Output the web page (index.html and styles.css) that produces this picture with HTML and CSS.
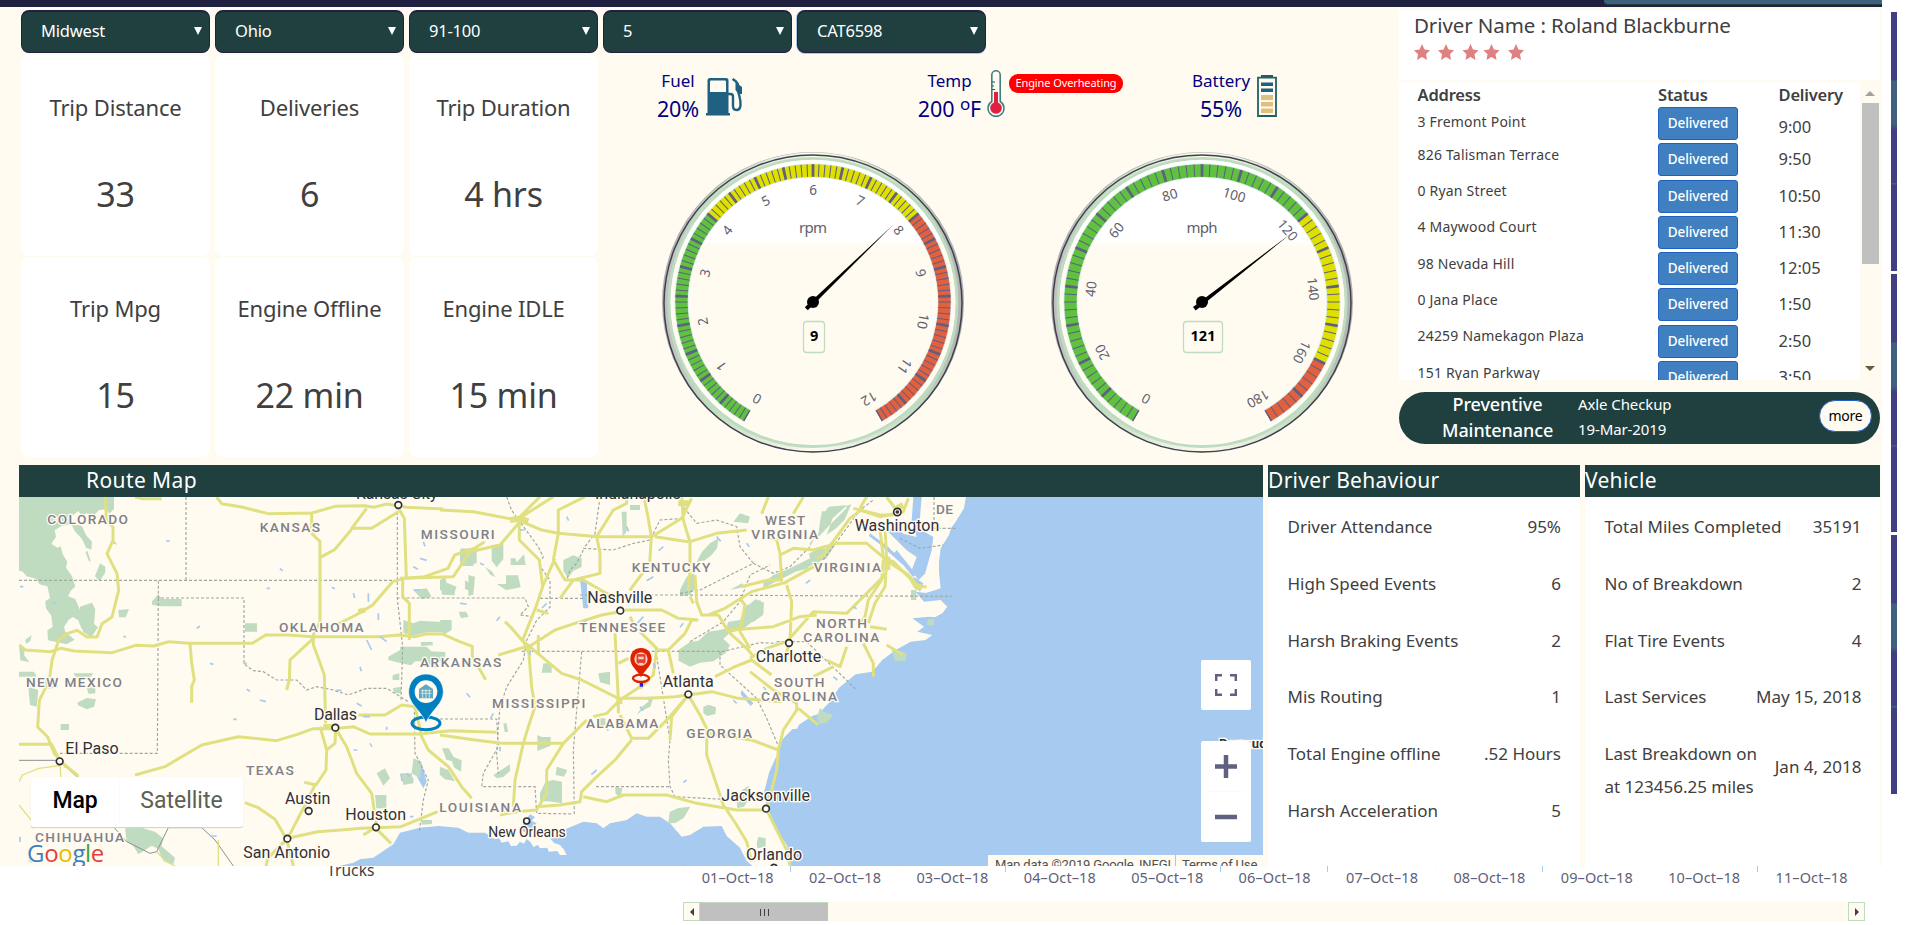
FILE: index.html
```html
<!DOCTYPE html>
<html lang="en">
<head>
<meta charset="utf-8">
<title>Fleet Dashboard</title>
<link rel="stylesheet" href="styles.css">
</head>
<body>
<div class="page">
<div class="screen">
<main class="dash">
  <div class="topbar"><div class="topbar-tab"></div></div>
  <section class="upper">
    <div class="left">
      <div class="selects">
        <div class="select"><span>Midwest</span><i></i></div>
        <div class="select"><span>Ohio</span><i></i></div>
        <div class="select"><span>91-100</span><i></i></div>
        <div class="select"><span>5</span><i></i></div>
        <div class="select focus"><span class="caps">CAT6598</span><i></i></div>
      </div>
      <div class="left-body">
        <div class="cards">
          <div class="card"><h3>Trip Distance</h3><p>33</p></div>
          <div class="card"><h3>Deliveries</h3><p>6</p></div>
          <div class="card"><h3>Trip Duration</h3><p>4 hrs</p></div>
          <div class="card"><h3>Trip Mpg</h3><p>15</p></div>
          <div class="card"><h3>Engine Offline</h3><p>22 min</p></div>
          <div class="card"><h3>Engine IDLE</h3><p>15 min</p></div>
        </div>
        <div class="center">
          <div class="metrics">
            <div class="metric fuel">
              <div class="metric-text"><span>Fuel</span><b>20%</b></div>
              <svg class="fuel-icon" width="37" height="38" viewBox="0 0 37 38"><path d="M4 0h16q2.500 0 2.500 2.500V35H24v2.500H0V35h1.500V2.500Q1.500 0 4 0z" fill="#206080"/><path d="M5 2.500h14q1 0 1 1V14H4V3.500q0-1 1-1z" fill="#fffbf0"/><path d="M22 16h2.500q2.500 0 2.500 3v9q0 4 3.500 4t4-4.500q.3-4-1-9l-1.500-6V8q0-3-2.500-5l-3-2" fill="none" stroke="#206080" stroke-width="2.400"/><path d="M29.500 4l6.500 5v7h-3.500l-3-4z" fill="#206080"/></svg>
            </div>
            <div class="metric temp">
              <div class="metric-text"><span>Temp</span><b>200 <sup>o</sup>F</b></div>
              <svg class="temp-icon" width="18" height="48" viewBox="0 0 18 48"><path d="M4.800 5a4.200 4.200 0 0 1 8.400 0v26.500a8 8 0 1 1-8.400 0z" fill="#fffbf0" stroke="#408080" stroke-width="1.600"/><path d="M7 22h4v10.500a5.800 5.800 0 1 1-4 0z" fill="#e02040"/><path d="M5 12h3M5 16h2M5 19.500h3" stroke="#206060" stroke-width="1.200"/></svg>
              <span class="alert">Engine Overheating</span>
            </div>
            <div class="metric battery">
              <div class="metric-text"><span>Battery</span><b>55%</b></div>
              <svg class="battery-icon" width="20" height="43" viewBox="0 0 20 43"><path d="M4 0h12v3H4z" fill="#206060"/><path d="M1 2.700h18V41H1z" fill="#fffbf0" stroke="#206060" stroke-width="1.800"/><path d="M4 7.500h12V11H4zM4 13.500h12V17H4z" fill="#206080"/><path d="M4 20h12v5H4zM4 27h12v4.500H4zM4 33.500h12V38H4z" fill="#e0c080"/></svg>
            </div>
          </div>
          <div class="gauges">
            <svg class="gauge" width="320" height="310" viewBox="-160 -155 320 310">
              <defs><linearGradient id="side" x1="0" x2="1" y1="0" y2="0"><stop offset="0" stop-color="#c0c0c0"/><stop offset=".15" stop-color="#c0dcc0"/><stop offset=".5" stop-color="#fffbf0"/><stop offset=".85" stop-color="#c0dcc0"/><stop offset="1" stop-color="#b4b4b4"/></linearGradient>
              <linearGradient id="face" x1="0" x2="0" y1="0" y2="1"><stop offset=".28" stop-color="#fff"/><stop offset=".31" stop-color="#fffbf0"/></linearGradient></defs>
              <ellipse rx="150" ry="149" class="rim-out"/>
              <circle r="147" fill="none" stroke="url(#side)" stroke-width="5"/>
              <ellipse cy="1.500" rx="149" ry="148.500" class="rim-dark"/>
              <circle r="144" cy=".5" class="rim-green"/>
              <circle r="142.300" fill="url(#face)"/>
              <path class="halo" d="M-65.750 113.900A131.500 131.500 0 1 1 65.750 113.900"/>
              <path class="band green" pathLength="300" stroke-dasharray="100 300" d="M-65.750 113.900A131.500 131.500 0 1 1 65.750 113.900"/>
              <path class="band yellow" pathLength="300" stroke-dasharray="0 100 100 300" d="M-65.750 113.900A131.500 131.500 0 1 1 65.750 113.900"/>
              <path class="band red" pathLength="300" stroke-dasharray="0 200 100 300" d="M-65.750 113.900A131.500 131.500 0 1 1 65.750 113.900"/>
              <path class="band tick" pathLength="300" stroke-dasharray=".45 2.050" stroke-dashoffset=".22" d="M-65.750 113.900A131.500 131.500 0 1 1 65.750 113.900"/>
              <path class="band tick" pathLength="300" stroke-dasharray="1.200 11.300" stroke-dashoffset=".6" d="M-65.750 113.900A131.500 131.500 0 1 1 65.750 113.900"/>
              <g class="nums">
                <text transform="rotate(-150)" y="-107">0</text><text transform="rotate(-125)" y="-107">1</text><text transform="rotate(-100)" y="-107">2</text><text transform="rotate(-75)" y="-107">3</text><text transform="rotate(-50)" y="-107">4</text><text transform="rotate(-25)" y="-107">5</text><text y="-107">6</text><text transform="rotate(25)" y="-107">7</text><text transform="rotate(50)" y="-107">8</text><text transform="rotate(75)" y="-107">9</text><text transform="rotate(100)" y="-107">10</text><text transform="rotate(125)" y="-107">11</text><text transform="rotate(150)" y="-107">12</text>
              </g>
              <text class="unit" y="-69" textLength="28">rpm</text>
              <rect class="valbox" x="-9.500" y="19.500" width="21" height="31" rx="3"/><text class="val" x="1.200" y="39">9</text>
              <path d="M80.500 -77.500L-5.200 8.200-8.200 5.200z"/><circle r="6"/>
            </svg>
            <svg class="gauge" width="320" height="310" viewBox="-160 -155 320 310">
              <ellipse rx="150" ry="149" class="rim-out"/>
              <circle r="147" fill="none" stroke="url(#side)" stroke-width="5"/>
              <ellipse cy="1.500" rx="149" ry="148.500" class="rim-dark"/>
              <circle r="144" cy=".5" class="rim-green"/>
              <circle r="142.300" fill="url(#face)"/>
              <path class="halo" d="M-65.750 113.900A131.500 131.500 0 1 1 65.750 113.900"/>
              <path class="band green" pathLength="300" stroke-dasharray="200 300" d="M-65.750 113.900A131.500 131.500 0 1 1 65.750 113.900"/>
              <path class="band yellow" pathLength="300" stroke-dasharray="0 200 66.667 300" d="M-65.750 113.900A131.500 131.500 0 1 1 65.750 113.900"/>
              <path class="band red" pathLength="300" stroke-dasharray="0 266.667 33.333 300" d="M-65.750 113.900A131.500 131.500 0 1 1 65.750 113.900"/>
              <path class="band tick" pathLength="300" stroke-dasharray=".45 2.883" stroke-dashoffset=".22" d="M-65.750 113.900A131.500 131.500 0 1 1 65.750 113.900"/>
              <path class="band tick" pathLength="300" stroke-dasharray="1.200 15.467" stroke-dashoffset=".6" d="M-65.750 113.900A131.500 131.500 0 1 1 65.750 113.900"/>
              <g class="nums">
                <text transform="rotate(-150)" y="-107">0</text><text transform="rotate(-116.700)" y="-107">20</text><text transform="rotate(-83.300)" y="-107">40</text><text transform="rotate(-50)" y="-107">60</text><text transform="rotate(-16.700)" y="-107">80</text><text transform="rotate(16.700)" y="-107">100</text><text transform="rotate(50)" y="-107">120</text><text transform="rotate(83.300)" y="-107">140</text><text transform="rotate(116.700)" y="-107">160</text><text transform="rotate(150)" y="-107">180</text>
              </g>
              <text class="unit" y="-69" textLength="31">mph</text>
              <rect class="valbox" x="-18.500" y="19.500" width="39" height="31" rx="3"/><text class="val" x="1" y="39">121</text>
              <path d="M88.500 -68L-6.300 8.500-9 5z"/><circle r="6"/>
            </svg>
          </div>
        </div>
      </div>
    </div>
    <div class="right">
      <div class="driver">
        <h2>Driver Name : Roland Blackburne</h2>
        <svg width="112" height="18" viewBox="0 0 112 18" fill="#e08080"><defs><path id="star" d="M8 0l2.500 5.500 5.500.7-4 4 1 5.800-5-2.900L3 16l1-5.800-4-4 5.500-.7z"/></defs><use href="#star" y="1"/><use href="#star" x="24" y="1"/><use href="#star" x="48.500" y="1"/><use href="#star" x="69.500" y="1"/><use href="#star" x="94" y="1"/></svg>
      </div>
      <div class="stops">
        <div class="stop-list">
          <div class="stop head"><span>Address</span><span>Status</span><span>Delivery</span></div>
          <div class="stop first"><span>3 Fremont Point</span><a>Delivered</a><em>9:00</em></div>
          <div class="stop"><span>826 Talisman Terrace</span><a>Delivered</a><em>9:50</em></div>
          <div class="stop"><span>0 Ryan Street</span><a>Delivered</a><em>10:50</em></div>
          <div class="stop"><span>4 Maywood Court</span><a>Delivered</a><em>11:30</em></div>
          <div class="stop"><span>98 Nevada Hill</span><a>Delivered</a><em>12:05</em></div>
          <div class="stop"><span>0 Jana Place</span><a>Delivered</a><em>1:50</em></div>
          <div class="stop"><span>24259 Namekagon Plaza</span><a>Delivered</a><em>2:50</em></div>
          <div class="stop"><span>151 Ryan Parkway</span><a>Delivered</a><em>3:50</em></div>
        </div>
        <div class="vscroll"><i class="up"></i><div class="vthumb"></div><i class="down"></i></div>
      </div>
      <div class="pm">
        <div class="pm-title">Preventive<br>Maintenance</div>
        <div class="pm-text">Axle Checkup<br>19-Mar-2019</div>
        <div class="more">more</div>
      </div>
    </div>
  </section>
  <section class="lower">
    <div class="panel map-panel">
      <h2>Route Map</h2>
      <div class="map">
      <svg width="1244" height="369" viewBox="57 111 3732 1107" preserveAspectRatio="none">
        <rect x="57" y="111" width="3732" height="1107" fill="#fffbf0"/>
        <g class="water">
          <path d="M1018 1218l42-10 20-10 40-5 60-40 20-35 60-15 55-5 60 5 30 15 50 0 30 20 12-4 8 14 20-4 8 14 17-1 10-12 12 6 8-14 12 10 8 14 14-6 6 10 22-2 4 12 26-2 8 12 20 0-8-16-12-14-18-6-12-14 40-25 60-25 40 5 20 15 20-15 50-10 30-20 30 10 40 0 30 20 35 40 25-5 40-25 55-2 15 30 40 35 20 40 30 25 10 30z"/>
          <path d="M2372 1218l-10-60-20-30-15-30-25-50-10-50 15-60 20-45 8-14 4-30 13-16 25-25 14-2 6-12 40-26 18-6 32-34 30-45 50-40 50-8 30-35 40-30 45-25 45-5 20-15-45-10 20-15-35-25 50-5 18 2 22-12 15-20-20-20-50 5-25-30 30 4 30-9 15-5-5-50 0-30 5-40 25-40 6-20 14-20 25-40 10-60 40-55H3789V1218z"/>
          <path d="M2740 111h25l-5 60-10 30 50 30-5 40-20 70-20 20-20-30 15-40-30-20-60-60 30-10 20 20 40 10-15-50z"/>
          <path d="M2650 250l70 60-10 6-62-56zM2690 270l60 75-12 5-56-70zM2610 220l60 45-8 5-55-42zM2740 350l30 20-10 25-18-20z"/>
          <path d="M1555 1105l35-25 20 10-30 30zM1740 360l20 0 5 85-15 0zM1570 1088l20-25 15 8-20 22zM1245 940l20-30 15 55-10 20zM2225 690l35 40-8 8-30-35zM1200 940l40 15 0 14-36-5z"/>
        </g>
        <g class="parks">
          <path d="M57 111h285v36l-14 14-8-14-24 4-22 26-14-18-16 10-8-16-30 22 18 16 22 8 12 26 18 20-2 24-16-6-12-26-22-24-10-20-28 4-22 14 4 20-14 20 18 12 10-4 6 24 14 22-4 18 18 26 10 30-14 14-8 16 22 8 10 24 8 20-6 22-20-12-12 8-14 22 4 14 28 24-24 14-56-12-2-30 16-10-4-34-16-22-2-22 14-8-8-36-24-6-8-16-30-8-12-14-16-4-24-10z"/>
          <path d="M240 440l36-12 10 20-4 44 12 10-20 30-24-16-14-30zM300 310l16 10 0 18-18 26-13-16zM262 272l10 30-4 4-12-30zM340 238l12 16-16-4zM355 450l32-3-10 25-20 0zM455 425l20-22 10 14 60 0v22h-60l-28-4zM735 490h36v25h-36zM57 555l16 12 0 20 16 20-28-6zM57 635h45l8 15h-53zM75 540l20-15-4 18-12 8zM220 640l60 0-15 20-35-5zM85 680l30 10-5 50-20-5zM130 660l40 0 4 22-30 4zM260 684l26-4 0 20-20 2zM232 728l28-14 28 4-6 22-22 8-26-12zM182 792h25v18h-25zM375 1105l50-2 40 12 24 20-4 24 40 34-5 20-30-10-15-36-20-10-40 26-15-26-20-12zM90 1180l6 30-10-6zM1130 940l25-15 15 30-20 22zM1205 940l30 0 5 30-30 5zM1240 895l25 10-5 50-25-15zM1125 1005h34v40h-30zM1380 270l50-10 0 50-50 8zM1210 480l30 10 20-8 80 5v30h-60l-40 10-30-8zM1240 390l40-5 15 25-30 8zM1320 360l50 20-10 25-40-15zM1395 360l20 15 0 20-20-8zM1376 455l22 0 8 16-24 2zM1165 590l35-20 0-10 80 0 14 14 42 2 0 26-20 4-2 18-40-4-8-16-20 0-14 12-34-8-33-8zM1262 546l36 0 0 10-34 2zM1178 645l20-5 0 20-20 0zM1178 685l25-5 0 20-20 0zM1326 865l20 0 15 26 24 10-2 34-20-12-8-20-16-4zM1320 920l25 10 20 34-30-6-16-14zM1210 502l60-18 10 20-60 15zM1262 1080l34 0 0 12-30 2z"/>
          <g transform="translate(1320)"><path d="M62 265l48 3-10 50-40 0zM155 255l35-3 0 45-20 25-15-20zM212 295l14 0 4 12 22-24 5 32-45 0zM0 360l16-10 4 22 26 10-2 24-38-2zM85 345l20 5-5 54-15 4zM135 320l20 14 12 18-16-8zM170 372l28 0 0-26 36 0 8 36-44 8zM60 455l25 10-20 10zM0 480l35 0 0 30-25 15zM370 300l30-14 25 9 0 26-25 12-16 20-14-20zM310 610l25 0 0 28-30 0zM475 640l35-5 0 40-30-8zM480 775l16 0 0 20-16 5zM190 790l10 0 4 26-10 0zM292 825l14 6 26 0 0 26-40 16zM160 945l50-32 0 20-20 18-20 4zM350 920l32 10-10 20-25-5zM300 1000l16-34 22-6 28 5 0 65-40-6-26 0zM525 980l22 5-5 25-15-8zM590 765l15-24 20-16 0-15 16 0-10 30-26 12zM790 760l0-20 16-6 22 8-2 20-24 6zM685 1090l4-34 26-12 36-4-20 34-25 15zM880 185l20-25 30 10-6 20zM545 155l15 0 0 60-12 15zM570 135h30v15h-30zM810 250l25-15-4 30-16 20-20 16-25 4 16-30zM720 390l20-40 22-12 5 46-18 20-29 4zM870 390l35-20 12 10-47 10zM1130 775l10-32 10 12 30 10-20 24-20 2zM1365 570l35 10-2 22-24-12zM950 1150l5-20 22 5 0 25-25 5zM890 1025l20-15-4-20 20-12 6 30-20 32-20 4z"/>
          <path d="M715 570l35-24 25-4 30-27 35-5 20-6 4-18 36-6 10-24 10-20 40-16 10 16-20 40-46 34-34 8-20 18 20 20-14 24-36 24-40 4-30 12-34-18zM970 370l30-25 50-20 60-30-4-14 34-17 20 2 10-16 20-2-30 46-50 24-10 10-30 6-40 20-60 30zM1110 262l14-30 12-2 34-36 50-50-4-8-50 4-10 14-10 0-6 30-4 34-26 30zM1160 225l18-50 42-38 14-4-20 46-24 24zM900 480l20-40 26-22 26 10-2 36-30 22z"/></g>
          <path d="M2675 570l40 8 3 25-33 0zM2733 390l16 0 0 30-16 0zM2783 478l20 0 0 18-22 0z"/>
        </g>
        <g class="borders">
          <path d="M558 111V362M57 361H1190M475 362V414H732V612L760 632 790 635 830 660 890 660 920 690 950 680 1000 690 1045 705 1100 685 1160 685 1225 725M475 414L472 880H180M1192 111V415L1208 560 1203 720M1190 414H1575L1585 440 1560 465 1600 470M1243 740L1245 880 1285 960 1270 1020 1258 1115M1320 777H1490L1495 860 1450 940 1445 980H1605L1610 1060 1720 1062"/>
          <g transform="translate(1320)"><path d="M200 111l15 40 80 110 15 30-15 20 35 50 0 80-40 40-30 60-10 60-50 80-20 60-5 60-5 80 5 60M300 415h135M420 405H700L1535 409M245 574H850L960 548 1010 550M425 575L400 870 403 1062M648 575L690 840 685 900 690 980 705 1010 850 1018M468 980H690M840 575l0 40 110 100 30 60 40 95M750 545l100-60 50-60 30-80 60-30M720 400l60-10 160-80-40-50-10-60-60-20-60 10-40-50M430 270l-20 40-20 20-10 30M430 265l90 5 60-20 50-10 30-60 70-5M480 111l-15 110-35 45M1150 300l110-150 40-30M1010 545l90 0 150 145M940 310l60 30 50-20 60-60"/></g>
          <path d="M2802 111V205H2870M2700 235l60 30 70-10"/>
        </g>
        <g class="intl"><path d="M57 901H178L235 950 340 1100 380 1145 450 1180 470 1175 505 1103H605L645 1140 700 1218M230 950l-50-45"/></g>
        <g class="minor"><path d="M57 965l10-20 50-20 60-8M57 1035l40 50 0 20M655 1140l0 78M470 1175l30 30 25 13M180 905l3 60"/></g>
        <g class="roads">
          <path d="M317 111l2 70 20 20 0 40-18 40 30 60 5 50-20 80-30 20-15 40-30 0-30-20-30 10-25 20-20 60-8 60-30 60-5 80 30 30 20 50 20 20 15 20M57 555l20 15 75 5 30-10 40 8 115 5 70-22 55 2 45-13 60 5h190l40-25 70 0 70 5h200l60-5 50 5 30-8h50l50 22 40 15 0 30 40 70M570 550l5 60 8 50-8 20v48M57 853h98l25 50 55 45M405 945l90-25 110-65 110-25 115 12 60-18 50-18h60l60-6 50 22 150 0 90-10 140 5M650 111l15 20 60 10 80 20 130-2 70-20 90-2 25 5 40-10 60 10 110 5M405 111l20 5 60 0M1100 145l-45 60 60 0 80-50M1055 208l-50 60-45 25M935 160l0 60 25 25v240l-20 40 0 30 15 40 18 50 4 145M940 535l-70 65-2 60-8 30M1195 145l18 30 6 180 55-5 70-25 20-40 60-20 30-20M1213 355l-35 10-60 70-50 30-60 30M1208 360v50l20 20 0 110M1075 765h80l50-30 40 5 20 90 20 40 60 50 40 60 30 35M960 800l20 70 25-20 2-45M980 870l-2 60-30 45-35-8M945 975l-30 60-52 100-60 60-5 25M1010 810l30 50 30 80 45 60 15 100-40 25M863 1135l90-20 70-5 60-5 120-5 110-45M1128 1105l45 45M735 1028l40 15 50 35 35 60 20 80"/>
          <path d="M970 800h40M1075 455l20-5" stroke-width="16"/>
          <g transform="translate(1320)"><path d="M-120 355l160-5 20-30 30-45 90-20 60-70 5-15M0 150l100 5 130 25 110-70M230 180l70-70M245 185l60 25 50 10 120 10 160 0 90-55 30-60M238 190l0 50 60 60 10 80-20 60-40 100 20 40M355 220l0-70 80-40M355 220l-15 80 35 60 55 0 60 35 20 10M310 375l35-80M360 415l40-55 80-20 0-60-10-50 50-80 40-20 0-20M612 111l12 60 10 60-5 80-30 40-30 40M725 111l5 70 20 65 0 85-5 60M750 245l80-25 90-10M555 450h110l50 25 60 5M645 230l100 15M540 455l-55 10-80 25-60 20-70 45-100 30M265 560l10 120 10 60-20 60-15 50-25 110-5 80M245 540l60 50 60 50 60 20 110 55 90 0 80-5 110-15 80 20 130 10M195 485l20 20 35 40M290 450l35 10M295 585l0-60M525 520l5 100 5 100 0 40M535 610l30-15M600 680l-60 40-40 40-40 10M540 765l35 70 50 0 60-60 60-70M440 780l-70 70-120 0-65 0-80-10-105-15M370 850l-50 80 0 70-30 50-60 5-50 10M575 840l-50 60-60 55-40 40-5 30-60 10-70 5M430 1010l70 15 50-20 130 0 90 25 120 20 100 0M745 705l35 60 20 40 0 80 20 60 30 90 40 60 30 50 15 60M980 1050l30 60 30 60 10 48M805 820l130 20 80 30 15-60 40-60 0-20-70-40-70-55M1075 745l60 50M1015 870l-5 60-20 80-10 40M690 840l5-70 50-65M600 515l50 50-10 80-40 40M755 480l-20 40-50 50-30 0M685 570l15 70M590 510l-20-40M765 345l5 80 15 40 50 0 30 50 60 55 15 20M760 430l-10-20M1045 365l-110 30-80 50-50 20M900 415l15 20-15 80 30 50M870 510l130-10 80-30 50-5M930 595l50-30 60-20 80-90 100 5 60-60 60-60M825 650l60-30 50-20 60 45M1040 375l15 50-5 120-20 60M1340 300l-60-50-90 0-70 20-60-5-40 20 5 75-40 0-80 20M1340 300l-5-100M1030 370l110-60M1270 145l-40 30-80 110-20 10M1240 145l80 20 40 0M1340 300l-5 80-30 50-20 60M1345 305l60 40 35 40M1290 500l50 8M1220 560l-20 60-40-20M1270 550l30 60 0 40M1180 620l-60 30M1260 145l20-35M985 111l-20 50M1090 111l-30 50M980 230l30 10 10 40"/>
          <path d="M210 180l30-4 25 8M715 130h32M538 712v20M2 0" stroke-width="18"/></g>
          <path d="M2580 150l60 20 70-15 15-40M2660 111l30 40M2640 210l10 85 30 10 50 50 15 25 35 0M2650 300l-5 60-40 60-10 50-15 20M2660 555l50 30"/>
          <path d="M2662 290v40M2690 145l20-10M2745 380h20" stroke-width="18"/>
        </g>
        <g class="ponds"><path d="M498 243h12M840 325l8 8M800 385h10M590 505l10-6M730 610h10M630 610l10 3M780 720l18 5M740 688l10 6M700 778h10M1105 400v25M1135 460v20M1060 400l4 14M995 382l10 4M1100 540l15 30M1140 530l20 15M1010 690l15 2M1070 730l15 8M1090 770l20 0M1080 620l4 14M1160 800v10M1270 245l5 14M1260 295l20 6M1240 320l14 8M1240 390h20M1380 430l20 2M1400 700l10 12M1440 310l12 5M1590 570l0 15M1110 850l6 10M1060 870l12 0M1220 940l10 10M1230 1070l10 0M1960 350l-20 12M1990 260l-14 12M2150 230l12 14M2050 490l-10 12M1930 470l-20 22M1640 430l-14 14M1500 470l-10 12M1480 760l-8 14M1500 860l0 14M1790 930l-16 14M1760 480l-14 14M2060 960l-10 8M1820 800l4 12M1920 740l10 12M1960 610l6 14M2290 680l8 10M2440 700l20 6M2500 650l12 10M2560 440l10 6M2430 360l-12 10M2350 220l-12 20M2240 250l8 10M2200 720l10 10M1700 170l6 12M1560 210l14 0M1880 200l6 14M60 380h10M160 425l6 8M370 530h8M60 1130v16M630 1128h20"/></g>
        <g class="state">
          <text x="142" y="192" textLength="242">COLORADO</text><text x="779" y="215" textLength="181">KANSAS</text><text x="1262" y="237" textLength="222">MISSOURI</text><text x="837" y="515" textLength="254">OKLAHOMA</text><text x="78" y="682" textLength="288">NEW MEXICO</text><text x="1260" y="620" textLength="244">ARKANSAS</text><text x="738" y="944" textLength="143">TEXAS</text><text x="105" y="1145" textLength="267">CHIHUAHUA</text><text x="1318" y="1055" textLength="245">LOUISIANA</text><text x="1476" y="743" textLength="280">MISSISSIPPI</text><text x="1758" y="803" textLength="217">ALABAMA</text><text x="2059" y="834" textLength="197">GEORGIA</text><text x="1738" y="515" textLength="258">TENNESSEE</text><text x="1895" y="335" textLength="236">KENTUCKY</text><text x="2295" y="194" textLength="120">WEST</text><text x="2254" y="236" textLength="200">VIRGINIA</text><text x="2441" y="335" textLength="202">VIRGINIA</text><text x="2448" y="503" textLength="153">NORTH</text><text x="2410" y="545" textLength="228">CAROLINA</text><text x="2322" y="681" textLength="151">SOUTH</text><text x="2283" y="723" textLength="228">CAROLINA</text><text x="2808" y="162" textLength="51">DE</text>
        </g>
        <g class="dots"><circle cx="1195" cy="135" r="10"/><circle cx="1006" cy="803" r="10"/><circle cx="179" cy="904" r="10"/><circle cx="926" cy="1053" r="10"/><circle cx="1128" cy="1102" r="10"/><circle cx="862" cy="1136" r="10"/><circle cx="1861" cy="452" r="10"/><circle cx="2367" cy="549" r="10"/><circle cx="2065" cy="703" r="10"/><circle cx="1580" cy="1083" r="9"/><circle cx="2298" cy="1046" r="10"/><circle cx="2322" cy="1222" r="9"/><circle cx="2692" cy="156" r="11"/><circle cx="2692" cy="156" r="3"/></g>
        <g class="city">
          <text x="1068" y="116" textLength="245">Kansas City</text><text x="1785" y="118" textLength="257">Indianapolis</text><text x="942" y="780" textLength="129">Dallas</text><text x="196" y="881" textLength="160">El Paso</text><text x="855" y="1032" textLength="136">Austin</text><text x="1036" y="1080" textLength="182">Houston</text><text x="730" y="1193" textLength="260">San Antonio</text><text x="1762" y="430" textLength="195">Nashville</text><text x="2267" y="606" textLength="197">Charlotte</text><text x="1988" y="681" textLength="153">Atlanta</text><text x="1465" y="1132" textLength="232" class="small">New Orleans</text><text x="2164" y="1024" textLength="266">Jacksonville</text><text x="2238" y="1200" textLength="168">Orlando</text><text x="2564" y="213" textLength="254">Washington</text><text x="3657" y="864" class="bold" textLength="165">Bermuda</text>
        </g>
        <g class="pin-blue"><ellipse cx="1278" cy="790" rx="42" ry="19" fill="none" stroke="#0080c0" stroke-width="9"/><path d="M1278 642c32 0 52 24 52 54 0 36-36 54-52 92-16-38-52-56-52-92 0-30 20-54 52-54z" fill="#0080c0" stroke="#fffbf0" stroke-width="2"/><circle cx="1278" cy="695" r="34" fill="#fffbf0"/><path d="M1257 687l21-14 21 14v28h-42z" fill="#60a8c0"/><path d="M1262 692h32M1262 700h32M1268 688v26M1278 688v26M1288 688v26" stroke="#d0e4d8" stroke-width="3"/></g>
        <g class="pin-red"><path d="M1924 668v12" stroke="#2020e0" stroke-width="10"/><ellipse cx="1923" cy="655" rx="24" ry="11" fill="none" stroke="#e02000" stroke-width="7"/><path d="M1923 564c19 0 32 14 32 33 0 22-22 34-32 55-10-21-32-33-32-55 0-19 13-33 32-33z" fill="#e02000"/><circle cx="1923" cy="597" r="20" fill="#f8d0c0"/><path d="M1911 584h24v23h-24zM1913 612l5-5M1933 612l-5-5" fill="#e04030" stroke="#e04030" stroke-width="3"/><path d="M1915 590h16v8h-16z" fill="#f8d0c0"/></g>
        <g class="google"><text x="81" y="1205" textLength="232"><tspan fill="#4080c0">G</tspan><tspan fill="#e04040">o</tspan><tspan fill="#e0c000">o</tspan><tspan fill="#4080c0">g</tspan><tspan fill="#40a040">l</tspan><tspan fill="#e04040">e</tspan></text></g>
      </svg>
      <div class="map-type"><span class="on">Map</span><span>Satellite</span></div>
      <div class="map-btns">
        <div class="full"><svg width="22" height="22" viewBox="0 0 22 22"><path d="M1.200 7V1.200H7M15 1.200h5.800V7M20.800 15v5.800H15M7 20.800H1.200V15" fill="none" stroke="#606080" stroke-width="2.400"/></svg></div>
        <div class="zoom"><svg width="50" height="101" viewBox="0 0 50 101"><path d="M14 25.500h22M25 14v23M14 76h22" stroke="#606080" stroke-width="4.500"/><path d="M6 50.500h39" stroke="#fffbf0"/></svg></div>
      </div>
      <div class="credit"><span>Map data ©2019 Google, INEGI</span><span>Terms of Use</span></div>
      </div>
    </div>
    <div class="panel behaviour">
      <h2>Driver Behaviour</h2>
      <dl><dt>Driver Attendance</dt><dd>95%</dd><dt>High Speed Events</dt><dd>6</dd><dt>Harsh Braking Events</dt><dd>2</dd><dt>Mis Routing</dt><dd>1</dd><dt>Total Engine offline</dt><dd>.52 Hours</dd><dt>Harsh Acceleration</dt><dd>5</dd></dl>
    </div>
    <div class="panel vehicle">
      <h2>Vehicle</h2>
      <dl><dt>Total Miles Completed</dt><dd>35191</dd><dt>No of Breakdown</dt><dd>2</dd><dt>Flat Tire Events</dt><dd>4</dd><dt>Last Services</dt><dd>May 15, 2018</dd><dt class="two">Last Breakdown on<br>at 123456.25 miles</dt><dd class="two">Jan 4, 2018</dd></dl>
    </div>
  </section>
</main>
<aside class="strip"><i></i><i></i><i></i></aside>
</div>
<footer class="timeline">
  <div class="trucks"><span>Trucks</span></div>
  <div class="axis">
    <div class="days"><span>01–Oct–18</span><span class="b">02–Oct–18</span><span>03–Oct–18</span><span class="b">04–Oct–18</span><span>05–Oct–18</span><span class="b">06–Oct–18</span><span class="b">07–Oct–18</span><span>08–Oct–18</span><span class="b">09–Oct–18</span><span>10–Oct–18</span><span class="b">11–Oct–18</span></div>
    <div class="hscroll"><div class="hbtn"><i class="l"></i></div><div class="hthumb"><i></i><i></i><i></i></div><div class="hbtn end"><i class="r"></i></div></div>
  </div>
</footer>
</div>
</body>
</html>
```
FILE: styles.css
```css
* { box-sizing: border-box; }
body { margin: 0; background: #fff; color: #404040; font-family: "Noto Sans", "Open Sans", sans-serif; }
h2, h3, p, dl, dt, dd { margin: 0; font-weight: 400; }
.page { width: 1920px; height: 925px; overflow: hidden; display: flex; flex-direction: column; }
.screen { display: flex; height: 866px; }
.dash { width: 1882px; background: #fffbf0; }
.topbar { height: 7px; background: #202040; display: flex; justify-content: flex-end; }
.topbar-tab { width: 278px; height: 5px; background: #406080; border-bottom: 1px solid #204040; border-bottom-left-radius: 4px; }
.upper { display: flex; height: 458px; padding-top: 3px; }
.left { width: 1399px; }
.selects { display: flex; gap: 5px; padding-left: 21px; height: 45px; }
.select { width: 189px; height: 43px; border-radius: 8px; background: #204040; border: 1px solid #202040; border-top-width: 2px; color: #fff; font-size: 16.500px; line-height: 38px; padding: 0 7px 2px 19px; display: flex; justify-content: space-between; align-items: center; letter-spacing: -.2px; }
.select i { border: 4px solid transparent; border-top: 8px solid #fff; border-bottom: 0; margin-bottom: 1px; }
.select.focus { box-shadow: 0 1px 0 #a6caf0, -1px 0 0 #a6caf0; }
.left-body { display: flex; }
.cards { margin-left: 21px; width: 577px; display: grid; grid-template-columns: repeat(3, 189px); grid-auto-rows: 200.500px; gap: 1px 5px; }
.card { background: #fff; border-radius: 8px; text-align: center; padding-top: 32px; }
.card:nth-child(n+4) { padding-top: 31px; }
.card h3 { font-size: 22px; line-height: 40px; letter-spacing: -.17px; white-space: nowrap; }
.card p { font-size: 34px; line-height: 50px; margin-top: 42px; letter-spacing: -.2px; }
.center { flex: 1; }
.metrics { display: grid; grid-template-columns: 261px 274px 1fr; padding-left: 58px; height: 91.700px; color: #000080; }
.metric { display: flex; align-items: flex-start; padding-top: 13px; }
.metric-text { display: flex; flex-direction: column; align-items: center; white-space: nowrap; }
.metric-text span { font-size: 17px; line-height: 25px; letter-spacing: 0; }
.metric-text b { font-weight: 400; font-size: 21.500px; line-height: 31px; letter-spacing: -.1px; }
.metric-text sup { font-size: 17px; line-height: 0; vertical-align: 7px; }
.fuel .metric-text { width: 44px; }
.temp .metric-text { width: 65px; }
.battery .metric-text { width: 60px; }
.fuel-icon { margin: 10px 0 0 6px; }
.temp-icon { margin: 2px 0 0 5px; }
.battery-icon { margin: 7px 0 0 6px; }
.alert { margin: 6px 0 0 4px; height: 19px; width: 114px; border-radius: 9px; background: #f00; color: #fff; font-size: 11px; line-height: 18px; text-align: center; letter-spacing: -.1px; white-space: nowrap; }
.gauges { display: flex; gap: 68.700px; padding-left: 55.300px; }
.gauge { display: block; }
.rim-out { fill: #fffbf0; stroke: #b0b0b0; stroke-width: 2; }
.rim-dark { fill: none; stroke: #404050; stroke-width: 1.500; }
.rim-green { fill: #fff; stroke: #c0dcc0; stroke-width: 3; }
.halo { fill: none; stroke: #d8ecf0; stroke-width: 14; }
.band { fill: none; stroke-width: 12.300; }
.green { stroke: #60c040; }
.yellow { stroke: #e0e000; }
.red { stroke: #e06040; }
.tick { stroke: #606080; }
.nums text { font-size: 13.500px; text-anchor: middle; fill: #606070; }
.unit { font-size: 15px; text-anchor: middle; fill: #606068; }
.valbox { fill: #fffbf0; stroke: #c0dcc0; stroke-width: 1.300; }
.val { font-size: 14.500px; font-weight: 700; text-anchor: middle; fill: #000; }
.right { width: 481px; }
.driver { height: 70px; background: #fff; padding-left: 15px; }
.driver h2 { font-size: 20.500px; line-height: 30px; white-space: nowrap; letter-spacing: -.1px; }
.driver svg { display: block; margin-top: 3px; }
.stops { margin-top: 2px; height: 298px; display: flex; overflow: hidden; }
.stop-list { width: 461px; background: #fff; padding-left: 18.500px; }
.stop { display: grid; grid-template-columns: 240.500px 120.500px 1fr; height: 36.300px; white-space: nowrap; }
.stop.head { height: 25px; font-weight: 600; }
.stop span { font-size: 14px; line-height: 20px; padding-top: 1.500px; letter-spacing: .2px; }
.stop.head span { font-size: 16.500px; line-height: 25px; padding: 0; letter-spacing: -.2px; }
.stop a { width: 80px; height: 33px; border: 1px solid #2060c0; border-radius: 3px; background: #4080c0; color: #fff; font-size: 13.500px; font-weight: 500; line-height: 31px; text-align: center; letter-spacing: -.1px; }
.stop em { font-style: normal; font-size: 16.500px; line-height: 24px; padding-top: 4px; }
.stop.first span { padding-top: 5px; }
.stop.first em { padding-top: 8px; }
.vscroll { width: 20px; padding-left: 2px; padding-top: 9px; display: flex; flex-direction: column; align-items: flex-start; }
.vscroll i { border: 5px solid transparent; margin-left: 3px; }
.vscroll .up { border-bottom-color: #a0a0a0; border-top: 0; }
.vthumb { width: 17px; height: 161px; background: #c0c0c0; margin-top: 7px; }
.vscroll .down { border-top-color: #606040; border-bottom: 0; margin-top: 102px; }
.pm { margin-top: 12px; height: 52px; border-radius: 26px; background: #204040; color: #fff; display: flex; align-items: flex-start; white-space: nowrap; }
.pm-title { width: 111px; margin-left: 43px; text-align: center; font-size: 18px; font-weight: 500; line-height: 25.500px; letter-spacing: -.1px; }
.pm-text { margin-left: 25px; width: 215px; font-size: 15px; line-height: 25px; letter-spacing: -.1px; }
.more { margin: 8px 0 0 26px; width: 53px; height: 32px; border: 1px solid #2060c0; border-radius: 16px; background: #fffbf0; color: #000; text-align: center; font-size: 14px; line-height: 29px; letter-spacing: -.2px; }
.lower { display: flex; gap: 5px; padding-left: 19px; }
.panel { height: 401px; background: #fff; }
.panel h2 { height: 32px; background: #204040; color: #fff; font-size: 21px; line-height: 31px; white-space: nowrap; letter-spacing: .4px; }
.map-panel { width: 1244px; }
.map-panel h2 { padding-left: 67px; }
.behaviour { width: 312px; }
.vehicle { width: 295px; }
.vehicle h2, .behaviour h2 { letter-spacing: .3px; }
.panel dl { display: grid; grid-template-columns: 1fr 80px; grid-auto-rows: 56.800px; padding: 13px 19px 0 19.500px; font-size: 17px; line-height: 33px; white-space: nowrap; letter-spacing: 0; }
.panel dd { justify-self: end; }
.panel dd.two { line-height: 59px; }
.map { position: relative; height: 369px; overflow: hidden; }
.map > svg { display: block; }
.water path { fill: #a6caf0; }
.parks path { fill: #c0dcc0; }
.borders path { fill: none; stroke: #a0a8a0; stroke-width: 3.500; stroke-dasharray: 9 6; }
.intl path { fill: none; stroke: #909090; stroke-width: 3; }
.minor path { fill: none; stroke: #e0e080; stroke-width: 4; }
.roads { stroke-width: 9; }
.roads path { fill: none; stroke: #e0e080; stroke-linejoin: round; }
.ponds path { fill: none; stroke: #a6caf0; stroke-width: 5; }
.state text { font: 500 41px Roboto, sans-serif; fill: #808088; paint-order: stroke; stroke: #fffbf0; stroke-width: 8; }
.city text { font: 400 48px Roboto, sans-serif; fill: #303038; paint-order: stroke; stroke: #fffbf0; stroke-width: 8; }
.city .small { font-size: 42px; }
.city .bold { font-size: 40px; font-weight: 700; }
.dots circle { fill: #fffbf0; stroke: #303030; stroke-width: 5; }
.google text { font: 500 72px "Open Sans", sans-serif; paint-order: stroke; stroke: #fffbf0; stroke-width: 5; }
.map-type { position: absolute; left: 12px; top: 280px; width: 212px; height: 50px; background: #fff; border-radius: 3px; box-shadow: 0 1px 1px #c0dcc0; display: flex; font: 400 23px/48px Roboto, sans-serif; color: #606050; text-align: center; }
.map-type span { flex: 1; }
.map-type .on { flex: 0 0 89px; color: #000; font-weight: 500; border-right: 1px solid #fffbf0; letter-spacing: -.2px; }
.map-btns { position: absolute; left: 1182px; top: 163px; display: flex; flex-direction: column; gap: 31px; }
.full { width: 50px; height: 50px; background: #fff; border-radius: 2px; display: grid; place-items: center; }
.zoom { width: 50px; height: 101px; background: #fff; border-radius: 2px; }
.credit { position: absolute; left: 969px; top: 358px; width: 275px; height: 20px; display: flex; font: 400 13px/20px Roboto, sans-serif; color: #505050; gap: 1px; white-space: nowrap; }
.credit span { background: #fffbf0; padding-left: 7px; width: 187px; letter-spacing: -.15px; }
.credit span + span { padding-left: 6px; width: 87px; }
.strip { margin-left: 9px; padding-top: 12px; display: flex; flex-direction: column; gap: 3px; }
.strip i { width: 6px; height: 258.500px; background: linear-gradient(#404080 68px, #406080 69px, #406080 112px, #404080 118px, #404080 171px, #406080 171px, #406080 172px, #404080 173px); }
.timeline { height: 59px; display: flex; background: #fff; }
.trucks { width: 683px; overflow: hidden; height: 20px; }
.trucks span { display: block; margin: -7px 0 0 327px; font-size: 15.500px; line-height: 23px; letter-spacing: .1px; }
.axis { width: 1182px; }
.days { display: flex; height: 36px; }
.days span { width: 107.400px; text-align: center; padding-left: 2px; font-size: 14.500px; line-height: 23px; color: #606078; background: linear-gradient(#fffbf0, #fffbf0) 0 0 / 1px 6px no-repeat; letter-spacing: .1px; }
.days .b { background-image: linear-gradient(#a6caf0, #a6caf0); }
.hscroll { height: 19px; background: #fffbf0; display: flex; }
.hbtn { width: 17px; border: 1px solid #c0dcc0; display: grid; place-items: center; }
.hbtn.end { margin-left: auto; }
.hbtn i { border: 4px solid transparent; }
.hbtn .l { border-right-color: #404040; border-left: 0; }
.hbtn .r { border-left-color: #404040; border-right: 0; }
.hthumb { width: 128px; background: #c0c0c0; border-top: 1px solid #c0dcc0; display: flex; justify-content: center; align-items: center; gap: 3px; }
.hthumb i { width: 1px; height: 7px; background: #404040; }
```
